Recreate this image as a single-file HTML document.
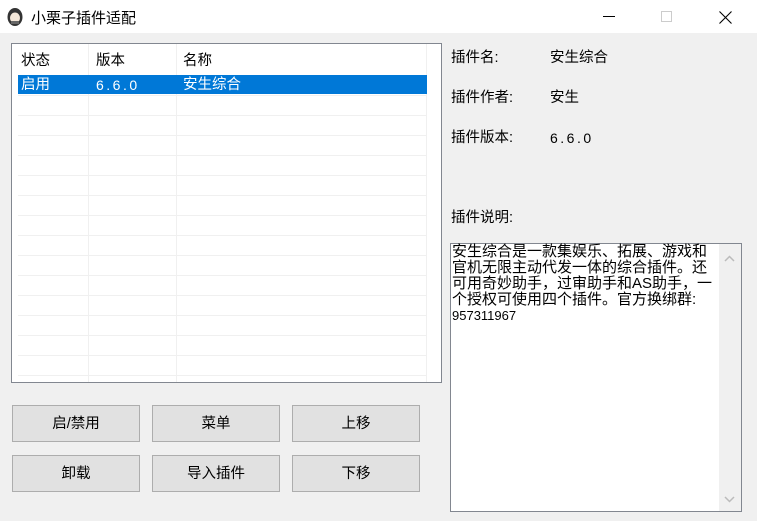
<!DOCTYPE html>
<html><head><meta charset="utf-8"><style>
*{margin:0;padding:0;box-sizing:border-box}
body{width:757px;height:521px;background:#f0f0f0;position:relative;overflow:hidden;font-family:"Liberation Sans","Noto Sans CJK SC",sans-serif;font-size:14px;color:#000}
.a{position:absolute}
.title{left:0;top:0;width:757px;height:33px;background:#fff}
.list{left:11px;top:43px;width:431px;height:340px;background:#fff;border:1px solid #828790}
.hl{background:#f0f0f0;height:1px;left:6px;width:409px}
.vl{background:#f0f0f0;width:1px;top:0;height:338px}
.btn{background:#e1e1e1;border:1px solid #adadad;width:128px;height:37px;text-align:center;line-height:37px;font-size:14.5px}
.lbl{font-size:14.5px;line-height:20px}
.num{font-size:14px;line-height:20px;letter-spacing:2.5px}
</style></head><body>
<div class="a title"></div>
<svg class="a" style="left:6px;top:7px" width="18" height="20" viewBox="0 0 18 20"><ellipse cx="9" cy="10" rx="7.5" ry="9" fill="#333"/><ellipse cx="9" cy="11" rx="5" ry="5.5" fill="#f3e6d8"/><rect x="5" y="14" width="8" height="3" fill="#666"/></svg>
<div class="a" style="left:31px;top:7px;font-size:15px">小栗子插件适配</div>
<div class="a" style="left:603px;top:16px;width:12px;height:1px;background:#000"></div>
<div class="a" style="left:661px;top:11px;width:11px;height:11px;border:1px solid #ccc"></div>
<svg class="a" style="left:719px;top:11px" width="13" height="13"><path d="M0.5 0.5L12.5 12.5M12.5 0.5L0.5 12.5" stroke="#000" stroke-width="1.1"/></svg>

<div class="a list">
 <div class="a vl" style="left:76px"></div>
 <div class="a vl" style="left:164px"></div>
 <div class="a vl" style="left:414px"></div>
 <div class="a lbl" style="left:9px;top:7px">状态</div>
 <div class="a lbl" style="left:84px;top:7px">版本</div>
 <div class="a lbl" style="left:171px;top:7px">名称</div>
 <div class="a" style="left:6px;top:31px;width:409px;height:19px;background:#0078d7;color:#fff">
  <span class="a lbl" style="left:3px;top:0">启用</span>
  <span class="a num" style="left:78px;top:0">6.6.0</span>
  <span class="a lbl" style="left:165px;top:0">安生综合</span>
 </div>
 <div class="a hl" style="top:51px"></div><div class="a hl" style="top:71px"></div><div class="a hl" style="top:91px"></div><div class="a hl" style="top:111px"></div><div class="a hl" style="top:131px"></div><div class="a hl" style="top:151px"></div><div class="a hl" style="top:171px"></div><div class="a hl" style="top:191px"></div><div class="a hl" style="top:211px"></div><div class="a hl" style="top:231px"></div><div class="a hl" style="top:251px"></div><div class="a hl" style="top:271px"></div><div class="a hl" style="top:291px"></div><div class="a hl" style="top:311px"></div><div class="a hl" style="top:331px"></div>
</div>

<div class="a lbl" style="left:451px;top:48px">插件名:</div>
<div class="a lbl" style="left:550px;top:48px">安生综合</div>
<div class="a lbl" style="left:451px;top:88px">插件作者:</div>
<div class="a lbl" style="left:550px;top:88px">安生</div>
<div class="a lbl" style="left:451px;top:128px">插件版本:</div>
<div class="a num" style="left:550px;top:128px">6.6.0</div>
<div class="a lbl" style="left:451px;top:208px">插件说明:</div>

<div class="a" style="left:450px;top:243px;width:292px;height:269px;background:#fff;border:1px solid #828790"></div>
<div class="a" style="left:719px;top:244px;width:22px;height:267px;background:#f0f0f0"></div>
<svg class="a" style="left:724px;top:255px" width="11" height="7"><path d="M1 6L5.5 1.5L10 6" stroke="#bbb" fill="none" stroke-width="1.5"/></svg>
<svg class="a" style="left:724px;top:496px" width="11" height="7"><path d="M1 1L5.5 5.5L10 1" stroke="#bbb" fill="none" stroke-width="1.5"/></svg>
<div class="a" style="left:452px;top:244px;width:290px;font-size:15px;line-height:16px;white-space:nowrap">安生综合是一款集娱乐、拓展、游戏和<br>官机无限主动代发一体的综合插件。还<br>可用奇妙助手，过审助手和AS助手，一<br>个授权可使用四个插件。官方换绑群:<br><span style="font-size:13px">957311967</span></div>

<div class="a btn" style="left:12px;top:405px">启/禁用</div>
<div class="a btn" style="left:152px;top:405px">菜单</div>
<div class="a btn" style="left:292px;top:405px">上移</div>
<div class="a btn" style="left:12px;top:455px">卸载</div>
<div class="a btn" style="left:152px;top:455px">导入插件</div>
<div class="a btn" style="left:292px;top:455px">下移</div>
</body></html>
